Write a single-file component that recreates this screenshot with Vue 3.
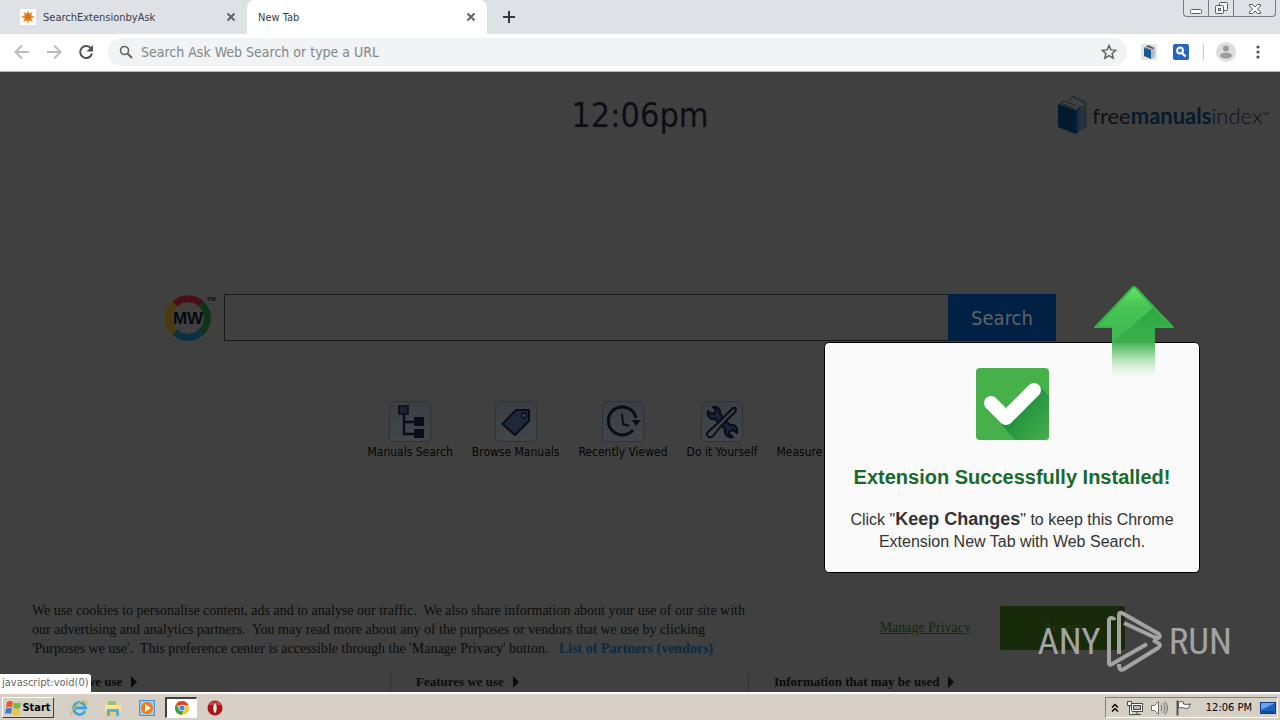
<script setup>
import { ref } from 'vue'

const address = ref('')
const query = ref('')

const shortcuts = [
  { id: 'tree', label: 'Manuals Search' },
  { id: 'tag', label: 'Browse Manuals' },
  { id: 'clock', label: 'Recently Viewed' },
  { id: 'tools', label: 'Do it Yourself' }
]

const purposes = ['Purposes we use', 'Features we use', 'Information that may be used']
</script>

<template>
  <div class="desktop">
    <!-- ===== TABS ===== -->
    <header class="tabs">
      <div class="tab">
        <svg class="favicon" viewBox="0 0 16 16">
          <rect width="16" height="16" fill="#fff" />
          <path d="M8 1l1.2 3.6L12.600 2.900 11.300 6.400 15 8l-3.700 1.400 1.500 3.700-3.700-1.700L8 15l-1.200-3.600-3.600 1.700 1.500-3.700L1 8l3.700-1.600-1.400-3.500 3.500 1.700z" fill="#f08a24" />
          <circle cx="8" cy="8" r="3" fill="#dd7413" />
        </svg>
        <span class="tab-title">SearchExtensionbyAsk</span>
        <button class="tab-close" aria-label="Close tab">
          <svg viewBox="0 0 10 10"><path d="M1.500 1.500l7 7M8.500 1.500l-7 7" /></svg>
        </button>
      </div>
      <div class="tab active">
        <span class="tab-title">New Tab</span>
        <button class="tab-close" aria-label="Close tab">
          <svg viewBox="0 0 10 10"><path d="M1.500 1.500l7 7M8.500 1.500l-7 7" /></svg>
        </button>
      </div>
      <button class="new-tab" aria-label="New tab">
        <svg viewBox="0 0 12 12"><path d="M6 0v12M0 6h12" /></svg>
      </button>
      <div class="window-buttons">
        <button aria-label="Minimize">
          <svg width="12" height="14" viewBox="0 0 12 14"><rect x=".5" y="8.500" width="11" height="4" rx="1" fill="#fff" stroke="#555a66" /></svg>
        </button>
        <button aria-label="Restore">
          <svg width="13" height="14" viewBox="0 0 13 14" fill="#f4f5f7" stroke="#555a66"><rect x="4.500" y="1.500" width="8" height="8" rx="1" /><rect x=".5" y="4.500" width="8" height="8" rx="1" /><rect x="3.500" y="7.500" width="2" height="2" /></svg>
        </button>
        <button class="wide" aria-label="Close">
          <svg width="12" height="14" viewBox="0 0 12 14"><path d="M.5 3.500h3L6 6l2.500-2.500h3v1.500L8.500 8l3 3v1.500h-3L6 10l-2.500 2.500h-3V11l3-3-3-3z" fill="#fff" stroke="#555a66" /></svg>
        </button>
      </div>
    </header>

    <!-- ===== TOOLBAR ===== -->
    <div class="toolbar">
      <button class="tool line muted" aria-label="Back">
        <svg width="16" height="16" viewBox="0 0 16 16"><path d="M15 8H2M8 1.500L1.500 8 8 14.500" /></svg>
      </button>
      <button class="tool line muted" aria-label="Forward">
        <svg width="16" height="16" viewBox="0 0 16 16"><path d="M1 8h13M8 1.500L14.500 8 8 14.500" /></svg>
      </button>
      <button class="tool line" aria-label="Reload">
        <svg width="16" height="16" viewBox="0 0 16 16"><path d="M13 4.500A6 6 0 1 0 14 9.500" /><path d="M15 1v6.500H8.500z" fill="#4e5257" stroke="none" /></svg>
      </button>
      <label class="omnibox">
        <svg width="14" height="14" viewBox="0 0 14 14" fill="none" stroke="#5f6368" stroke-width="1.600"><circle cx="5.500" cy="5.500" r="4" /><path d="M8.500 8.500l4.500 4.500" stroke-width="2" /></svg>
        <input v-model="address" type="text" aria-label="Address" placeholder="Search Ask Web Search or type a URL" />
        <svg width="16" height="16" viewBox="0 0 16 16" fill="none" stroke="#5f6368" stroke-width="1.500"><path d="M8 1.500l1.900 4.400 4.800.4-3.600 3.200 1.100 4.700L8 11.700l-4.200 2.500 1.100-4.700L1.300 6.300l4.800-.4z" /></svg>
      </label>
      <button class="tool" aria-label="FreeManualsIndex">
        <svg width="16" height="16" viewBox="0 0 16 16">
          <rect width="16" height="16" fill="#e3e5e8" />
          <path d="M8 1l6 2.500V13l-4 2z" fill="#b6bcc4" />
          <path d="M3 4l4-3 6 3-3.500 2.500z" fill="#555f69" />
          <path d="M3 4l7 2.500V15L3 12z" fill="#14598f" />
          <path d="M4.500 3l6.500 2.300" stroke="#fff" stroke-width=".8" />
        </svg>
      </button>
      <button class="tool" aria-label="Search extension">
        <svg width="16" height="16" viewBox="0 0 16 16">
          <rect width="16" height="16" rx="2" fill="#2565bd" />
          <circle cx="7" cy="6.500" r="3" fill="#4283d6" stroke="#fff" stroke-width="1.800" />
          <path d="M9 9l3.500 3.500" stroke="#fff" stroke-width="2.400" />
        </svg>
      </button>
      <span class="divider"></span>
      <button class="tool" aria-label="Profile">
        <svg width="20" height="20" viewBox="0 0 20 20"><circle cx="10" cy="10" r="10" fill="#dedede" /><circle cx="10" cy="6.500" r="3" fill="#9b9b9b" /><ellipse cx="10" cy="13.500" rx="6" ry="3" fill="#9b9b9b" /></svg>
      </button>
      <button class="tool" aria-label="Menu">
        <svg width="4" height="14" viewBox="0 0 4 14" fill="#4e5257"><circle cx="2" cy="2" r="1.600" /><circle cx="2" cy="7" r="1.600" /><circle cx="2" cy="12" r="1.600" /></svg>
      </button>
    </div>

    <!-- ===== NEW TAB PAGE ===== -->
    <main class="page">
      <div class="top">
        <h1 class="clock">12:06pm</h1>
        <div class="brand">
          <svg width="30" height="38" viewBox="0 0 30 38">
            <path d="M12 4l4-4 13 6v25l-7 3z" fill="#343639" stroke="#24282c" />
            <path d="M21 12l7-3v22l-7 3z" fill="#26333f" />
            <path d="M1 8l5-5 15 6-3 5z" fill="#292b2e" stroke="#4e5052" />
            <path d="M1 8l18 6v24L1 31z" fill="#031a2e" />
            <path d="M19 14l3-3v25l-3 2z" fill="#0a2a44" />
            <path d="M5 6l15 6M14 3l12 6" stroke="#56585a" fill="none" />
          </svg>
          <span class="brand-name">free<b>manuals</b><i>index</i></span><sup>™</sup>
        </div>
      </div>

      <div class="search-row">
        <svg class="mw" width="52" height="48" viewBox="0 0 52 48">
          <g fill="none" stroke-width="7">
            <path d="M10.900 9.900A19 19 0 0 1 37.100 9.900" stroke="#4b0e17" />
            <path d="M37.100 9.900A19 19 0 0 1 37.100 38.100" stroke="#0b3519" />
            <path d="M37.100 38.100A19 19 0 0 1 10.900 38.100" stroke="#0b3145" />
            <path d="M10.900 38.100A19 19 0 0 1 10.900 9.900" stroke="#4c3a08" />
          </g>
          <text class="mw-text" x="24" y="30" text-anchor="middle">MW</text>
          <text class="mw-tm" x="43" y="7">TM</text>
        </svg>
        <form class="search" @submit.prevent>
          <input v-model="query" type="text" aria-label="Search the web" />
          <button type="submit">Search</button>
        </form>
      </div>

      <nav class="shortcuts">
        <a v-for="s in shortcuts" :key="s.id" href="#" class="shortcut">
          <span class="tile">
            <svg v-if="s.id === 'tree'" width="32" height="36" viewBox="0 0 32 36">
              <path d="M10 10v20h12M10 18h12" fill="none" stroke="#080d17" stroke-width="2.500" />
              <rect x="5" y="2" width="9" height="8" fill="#1b2437" stroke="#080d17" stroke-width="1.500" />
              <rect x="20" y="13" width="10" height="9" fill="#080d1a" />
              <rect x="20" y="25" width="10" height="9" fill="#080d1a" />
            </svg>
            <svg v-else-if="s.id === 'tag'" width="32" height="32" viewBox="0 0 32 32">
              <path d="M2.500 18L16 4h13v11L15 29z" fill="#1d2839" stroke="#090d16" stroke-width="2" stroke-linejoin="round" />
              <circle cx="24" cy="9.500" r="2.500" fill="#353b45" stroke="#090d16" stroke-width="1.300" />
            </svg>
            <svg v-else-if="s.id === 'clock'" width="36" height="34" viewBox="0 0 36 34">
              <path d="M31 13a14 14 0 1 0-3 12" fill="none" stroke="#090d16" stroke-width="3" />
              <path d="M27 15h9l-5 6z" fill="#090d16" />
              <path d="M17 9l1 10 6 2" fill="none" stroke="#090d16" stroke-width="2" />
            </svg>
            <svg v-else width="36" height="36" viewBox="0 0 36 36" fill="#1a2335" stroke="#090d18" stroke-width="2" stroke-linejoin="round">
              <path d="M9 3c5-1 8 3 7 7l10 11c5-1 8 2 7 8l-4-3-3 1-1 3 4 3c-6 1-9-3-8-8L11 15c-5 1-8-3-7-8l4 3 3-1 1-3z" />
              <path d="M4 28l10-9L28 5c3-3 5 0 3 3L17 22 9 32c-4 3-8-1-5-4z" fill="#42464c" />
            </svg>
          </span>
          <span>{{ s.label }}</span>
        </a>
        <a href="#" class="shortcut last"><span>Measure</span></a>
      </nav>

      <!-- ===== COOKIES ===== -->
      <section class="consent">
        <div class="consent-main">
          <p>
            We use cookies to personalise content, ads and to analyse our traffic.&nbsp; We also share information about your use of our site with<br />
            our advertising and analytics partners.&nbsp; You may read more about any of the purposes or vendors that we use by clicking<br />
            'Purposes we use'.&nbsp; This preference center is accessible through the 'Manage Privacy' button.&nbsp;&nbsp; <a href="#">List of Partners (vendors)</a>
          </p>
          <a href="#" class="manage">Manage Privacy</a>
          <button class="accept">Accept</button>
        </div>
        <div class="purposes">
          <button v-for="p in purposes" :key="p">{{ p }}<span class="caret"></span></button>
        </div>
      </section>

      <div class="status">javascript:void(0)</div>

      <!-- ===== INSTALL DIALOG ===== -->
      <div class="dialog" role="dialog" aria-labelledby="dialog-title">
        <svg class="arrow" width="80" height="94" viewBox="0 0 80 94">
          <defs>
            <linearGradient id="arrowFill" gradientUnits="userSpaceOnUse" x1="0" y1="0" x2="0" y2="92">
              <stop offset="0" stop-color="#6be46c" />
              <stop offset=".25" stop-color="#46c254" />
              <stop offset=".6" stop-color="#43b852" />
              <stop offset="1" stop-color="#8fdc97" stop-opacity="0" />
            </linearGradient>
            <linearGradient id="arrowShade" gradientUnits="userSpaceOnUse" x1="0" y1="22" x2="0" y2="76">
              <stop offset="0" stop-color="#138a2e" stop-opacity=".5" />
              <stop offset="1" stop-color="#138a2e" stop-opacity="0" />
            </linearGradient>
          </defs>
          <path d="M40 1L79 41v2H61v50H18V43H1v-2z" fill="url(#arrowFill)" />
          <path d="M60 22l18 20H61v42H18V58z" fill="url(#arrowShade)" />
          <path d="M18 42H2L38 3q2-2 4 0l36 39H61" fill="none" stroke="#34b548" stroke-width="2" />
        </svg>
        <svg class="check" width="73" height="72" viewBox="0 0 73 72">
          <defs>
            <linearGradient id="checkShade" x1="0" y1="0" x2="1" y2="1">
              <stop offset=".3" stop-color="#198b3b" />
              <stop offset="1" stop-color="#48b04b" />
            </linearGradient>
          </defs>
          <rect width="73" height="72" rx="4" fill="#48b04b" />
          <path d="M62 17l11 11v40a4 4 0 0 1-4 4H39L25 56z" fill="url(#checkShade)" />
          <path d="M15 35l15 15 28-28" fill="none" stroke="#fff" stroke-width="14" stroke-linecap="round" stroke-linejoin="round" />
        </svg>
        <h2 id="dialog-title">Extension Successfully Installed!</h2>
        <p>Click "<b>Keep Changes</b>" to keep this Chrome Extension New Tab with Web Search.</p>
      </div>

      <div class="watermark">
        <span>ANY</span>
        <svg width="56" height="64" viewBox="0 0 56 64" fill="none" stroke="#a3a3a3" stroke-width="4" stroke-linejoin="round">
          <path d="M7 10V9q-5-3-5 2v42q0 3 3 1l35-20" />
          <path d="M12 44V5q0-3 3-2l37 21q2 3-1 4l-4-1L17 13" />
          <path d="M12 54q0 8 5 5l34-21q4-3 0-5l-5-3" />
        </svg>
        <span>RUN</span>
      </div>
    </main>

    <!-- ===== TASKBAR ===== -->
    <footer class="taskbar">
      <button class="start">
        <svg width="16" height="16" viewBox="0 0 16 16">
          <path d="M2 2q3-2 6 0L7 7.500q-3-1.500-6 0z" fill="#e8582a" />
          <path d="M9 2.500q3 1.500 7 0L15 8q-4 1.500-7 0z" fill="#7cb83c" />
          <path d="M1 8.500q3-1.500 6 0L6 14q-3-1.500-6 0z" fill="#3a7ed0" />
          <path d="M8 9q3 1.500 7 0l-1 5.500q-4 1.500-7 0z" fill="#f5c132" />
        </svg>
        Start
      </button>
      <div class="pinned">
        <button aria-label="Internet Explorer">
          <svg width="18" height="18" viewBox="0 0 18 18" fill="none">
            <path d="M15 12a6 6 0 1 1 .5-3H5" stroke="#38a5e4" stroke-width="2.800" />
            <path d="M2 16C-1 13 9 1 16 2c2 1 0 4-1 5" stroke="#e7b93a" stroke-width="1.300" />
          </svg>
        </button>
        <button aria-label="Explorer">
          <svg width="18" height="18" viewBox="0 0 18 18">
            <path d="M2 3h5l1 1h7v12H2z" fill="#edcf6a" /><path d="M4 2h8v4H4z" fill="#8fc47a" /><path d="M1 6h16v6H1z" fill="#f8e59b" />
            <path d="M3 10h12v7h-3v-4H6v4H3z" fill="#58afe0" />
          </svg>
        </button>
        <button aria-label="Media Player">
          <svg width="18" height="18" viewBox="0 0 18 18">
            <rect x="1.500" y="1.500" width="15" height="15" fill="#9bc8ec" stroke="#5291c9" /><circle cx="9" cy="9" r="6" fill="#ef7d15" /><path d="M7 5l6 4-6 4z" fill="#fff" />
          </svg>
        </button>
        <button class="running" aria-label="Chrome">
          <svg width="14" height="14" viewBox="0 0 14 14">
            <circle cx="7" cy="7" r="7" fill="#f7c924" /><path d="M7 7L1 3.400A7 7 0 0 1 13.400 4.200L7 4z" fill="#dd4233" /><path d="M1 3.400A7 7 0 0 0 6.500 14L9 8.500 4 8z" fill="#2c9f53" />
            <circle cx="7" cy="7" r="3.300" fill="#fff" /><circle cx="7" cy="7" r="2.600" fill="#4684e0" />
          </svg>
        </button>
        <button aria-label="Opera">
          <svg width="16" height="16" viewBox="0 0 16 16"><circle cx="8" cy="8" r="7.500" fill="#b31217" /><path d="M2 5a7 7 0 0 1 12 0" fill="#df4d4d" /><ellipse cx="8" cy="8" rx="2.300" ry="5.500" fill="#f3e4e2" stroke="#7d080c" /></svg>
        </button>
      </div>
      <div class="tray">
        <svg width="8" height="10" viewBox="0 0 8 10" fill="none" stroke="#000" stroke-width="1.400"><path d="M1 4.500L4 1.500l3 3M1 8.500l3-3 3 3" /></svg>
        <svg width="16" height="16" viewBox="0 0 16 16" fill="#fff" stroke="#4b4b4b"><rect x="4.500" y="3.500" width="11" height="8" /><rect x="6.500" y="5.500" width="7" height="4" fill="#b9b9b9" /><path d="M6 14.500h8M10 12v2" /><path d="M.5 1.500h4v4h-4zM2.500 6v8.500H6" /></svg>
        <svg width="17" height="14" viewBox="0 0 17 14" fill="#fff" stroke="#6b6b6b"><path d="M.5 4.500h3l4-4v13l-4-4h-3z" /><path d="M10 4q2 3 0 6M12 2q4 5 0 10M14 .5q5 6.500 0 13" fill="none" /></svg>
        <svg width="16" height="16" viewBox="0 0 16 16" fill="#fff" stroke="#555"><path d="M1.500.5v15" stroke-width="2" /><path d="M2.500 2q3-1 5 0v2q3 1 7 0l-2 4q-3 1-5 0V8q-2-1-5 0z" /></svg>
        <time>12:06 PM</time>
        <svg width="16" height="14" viewBox="0 0 16 14"><rect x=".5" y="1.500" width="15" height="11" fill="#1e62c0" stroke="#0c3a83" /><path d="M1 2h14L1 9z" fill="#69a3ec" /><path d="M2 11h12" stroke="#0b2e66" /></svg>
      </div>
    </footer>
  </div>
</template>

<style>
body {
  margin: 0;
}
</style>

<style scoped>
.desktop {
  display: flex;
  flex-direction: column;
  min-height: 100vh;
  font-family: "DejaVu Sans Condensed", "Noto Sans", sans-serif;
  font-size: 12px;
  color: #080808;
}

.desktop * {
  box-sizing: border-box;
}

button {
  border: none;
  padding: 0;
  background: none;
  font: inherit;
  color: inherit;
  display: flex;
  align-items: center;
  justify-content: center;
}

svg {
  display: block;
  flex: none;
}

/* ===== TABS ===== */
.tabs {
  display: flex;
  height: 34px;
  background: #dee1e6;
}

.tab {
  display: flex;
  align-items: center;
  width: 247px;
  padding: 0 10px 0 20px;
  font-size: 11px;
  color: #3c4043;
}

.tab.active {
  width: 240px;
  padding-left: 11px;
  background: #fff;
  border-radius: 8px 8px 0 0;
}

.favicon {
  width: 16px;
  height: 16px;
  margin-right: 7px;
}

.tab-title {
  flex: 1;
}

.tab-close {
  width: 12px;
  height: 12px;
}

.tab-close svg {
  width: 10px;
  stroke: #5f6368;
  stroke-width: 2;
}

.new-tab {
  width: 44px;
}

.new-tab svg {
  width: 12px;
  stroke: #34373b;
  stroke-width: 2;
}

.window-buttons {
  display: flex;
  align-self: flex-start;
  height: 17px;
  margin: 0 4px 0 auto;
  border: 1px solid #777b84;
  border-top: none;
  border-radius: 0 0 4px 4px;
}

.window-buttons button {
  width: 25px;
  border-right: 1px solid #777b84;
}

.window-buttons .wide {
  width: 41px;
  border-right: none;
}

/* ===== TOOLBAR ===== */
.toolbar {
  display: flex;
  align-items: center;
  height: 38px;
  padding: 0 6px 2px;
  background: #fff;
  border-bottom: 1px solid #b5b7b9;
}

.tool {
  width: 32px;
  height: 32px;
}

.tool.line svg {
  fill: none;
  stroke: #4e5257;
  stroke-width: 2;
}

.tool.muted svg {
  stroke: #b9bbbe;
}

.omnibox {
  display: flex;
  flex: 1;
  align-items: center;
  gap: 8px;
  height: 28px;
  margin: 0 6px;
  padding: 0 10px 0 11px;
  border-radius: 14px;
  background: #f1f3f4;
}

.omnibox input {
  flex: 1;
  min-width: 0;
  padding: 0;
  border: none;
  outline: none;
  background: none;
  font: inherit;
  font-size: 14px;
}

.omnibox input::placeholder {
  color: #80868b;
}

.divider {
  width: 1px;
  height: 16px;
  margin: 0 6px;
  background: #c8cacd;
}

/* ===== PAGE ===== */
.page {
  position: relative;
  display: flex;
  flex: 1;
  flex-direction: column;
  overflow: hidden;
  background: #404040;
}

.top {
  display: grid;
  grid-template-columns: 1fr auto 1fr;
  align-items: center;
  padding: 20px 11px 0;
}

.clock {
  grid-column: 2;
  margin: 0;
  font-size: 34px;
  font-weight: 400;
  line-height: 46px;
  color: #0d0d14;
}

.brand {
  display: flex;
  align-items: center;
  justify-self: end;
  font-family: Lato, sans-serif;
  font-size: 22px;
  color: #101113;
}

.brand-name {
  margin-left: 5px;
}

.brand b {
  color: #061a2e;
}

.brand i {
  font-style: normal;
  font-weight: 300;
}

.brand sup {
  font-size: 9px;
}

.search-row {
  display: grid;
  grid-template-columns: 1fr 65% 1fr;
  margin-top: 156px;
}

.mw {
  justify-self: end;
  margin-right: 8px;
}

.mw-text {
  font: bold 17px "Liberation Sans", sans-serif;
  fill: #07080c;
}

.mw-tm {
  font: bold 6px "Liberation Sans", sans-serif;
  fill: #0c0c0c;
}

.search {
  display: flex;
  height: 47px;
}

.search input {
  flex: 1;
  min-width: 0;
  border: 1px solid #171717;
  border-right: none;
  outline: none;
  background: #404040;
  padding: 0 12px;
  font: inherit;
  font-size: 20px;
}

.search button {
  width: 108px;
  background: #002144;
  font-size: 20px;
  color: #606367;
}

.shortcuts {
  display: flex;
  justify-content: center;
  gap: 19px;
  margin-top: 59px;
}

.shortcut {
  display: flex;
  flex-direction: column;
  align-items: center;
  gap: 2px;
  line-height: 16px;
  color: #050505;
  text-decoration: none;
}

.shortcut.last {
  width: 136px;
  justify-content: flex-end;
  align-items: flex-start;
}

.tile {
  display: flex;
  align-items: center;
  justify-content: center;
  width: 42px;
  height: 41px;
  border: 1px solid #2f3236;
  border-radius: 5px;
  background: linear-gradient(#3b3e42, #42464c);
}

/* ===== COOKIES ===== */
.consent {
  margin-top: auto;
  padding: 0 32px;
  font-family: "Liberation Serif", serif;
  font-size: 14px;
}

.consent-main {
  display: flex;
  align-items: center;
}

.consent p {
  margin: 0 auto 0 0;
  line-height: 19px;
  color: #0c0c0c;
}

.consent p a {
  font-weight: 700;
  color: #0a2b43;
  text-decoration: none;
}

.manage {
  margin: 0 29px 4px;
  color: #12280b;
}

.accept {
  width: 125px;
  height: 44px;
  margin: 0 123px 4px 0;
  border-radius: 2px;
  background: #172a0a;
  color: #26381b;
}

.purposes {
  display: flex;
  margin-top: 15px;
}

.purposes button {
  justify-content: flex-start;
  width: 358px;
  height: 19px;
  padding-bottom: 2px;
  font-size: 13px;
  font-weight: 700;
  color: #0b0b0b;
}

.purposes button + button {
  padding-left: 25px;
  border-left: 1px solid #303030;
}

.caret {
  margin-left: 9px;
  border: 6px solid transparent;
  border-left-color: #0b0b0b;
  border-right: none;
}

.status {
  position: absolute;
  left: 0;
  bottom: 0;
  height: 18px;
  padding: 0 2px;
  border-radius: 0 3px 0 0;
  background: #fff;
  font-size: 11px;
  line-height: 18px;
  color: #666;
}

/* ===== DIALOG ===== */
.dialog {
  position: absolute;
  top: 270px;
  right: 80px;
  width: 376px;
  padding: 25px 24px 19px;
  border: 1px solid #000;
  border-radius: 5px;
  background: #fafafa;
  font-family: "Liberation Sans", sans-serif;
  text-align: center;
}

.arrow {
  position: absolute;
  top: -58px;
  right: 25px;
}

.check {
  margin: 0 auto;
}

.dialog h2 {
  margin: 25px 0 19px;
  font-size: 20px;
  line-height: 24px;
  color: #19692e;
}

.dialog p {
  margin: 0;
  font-size: 16px;
  line-height: 22px;
  color: #333;
}

.dialog b {
  font-size: 18px;
}

.watermark {
  position: absolute;
  right: 48px;
  bottom: 18px;
  display: flex;
  align-items: center;
  gap: 6px;
  font-family: "Roboto Condensed", "Liberation Sans", sans-serif;
  font-size: 37px;
  line-height: 64px;
  color: #a3a3a3;
}

/* ===== TASKBAR ===== */
.taskbar {
  display: flex;
  height: 28px;
  padding: 3px 2px 2px;
  border-top: 2px solid #fff;
  background: #d5cfc6;
  font-size: 11px;
}

.start {
  gap: 1px;
  width: 52px;
  border: 1px solid #fff;
  border-right-color: #404040;
  border-bottom-color: #404040;
  font-weight: 700;
  color: #000;
}

.pinned {
  display: flex;
  gap: 2px;
  margin-left: 9px;
}

.pinned button {
  width: 32px;
}

.pinned .running {
  border: 1px solid #fff;
  border-top: 2px solid #404040;
  border-left: 2px solid #404040;
  background: #fff;
}

.tray {
  display: flex;
  align-items: center;
  gap: 8px;
  margin-left: auto;
  padding: 0 1px 0 5px;
  border: 1px solid #fff;
  border-top-color: #808080;
  border-left-color: #808080;
  color: #000;
}

.tray time {
  margin-left: 6px;
}
</style>
